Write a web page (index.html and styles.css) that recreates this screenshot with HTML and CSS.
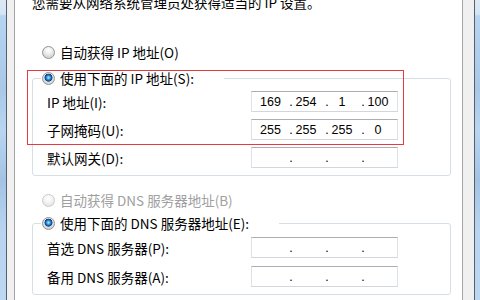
FILE: index.html
```html
<!DOCTYPE html>
<html lang="zh-CN">
<head>
<meta charset="UTF-8">
<title>Internet 协议版本 4 (TCP/IPv4) 属性</title>
<link rel="stylesheet" href="styles.css">
</head>
<body>
  <div class="desk left"></div>
  <div class="frame left"></div>
  <div class="pane">
    <div class="intro">您需要从网络系统管理员处获得适当的 IP 设置。</div>

    <div class="opt"><span class="radio"></span>自动获得 IP 地址(O)</div>

    <fieldset class="group">
      <legend class="opt"><span class="radio on"></span>使用下面的 IP 地址(S):</legend>
      <div class="row">
        <span>IP 地址(I):</span>
        <div class="ipbox">
          <span class="seg first">169</span>
          <span class="dot">.</span><span class="seg">254</span><span></span>
          <span class="dot">.</span><span class="seg">1</span><span></span>
          <span class="dot">.</span><span class="seg">100</span><span></span>
        </div>
      </div>
      <div class="row">
        <span>子网掩码(U):</span>
        <div class="ipbox">
          <span class="seg first">255</span>
          <span class="dot">.</span><span class="seg">255</span><span></span>
          <span class="dot">.</span><span class="seg">255</span><span></span>
          <span class="dot">.</span><span class="seg">0</span><span></span>
        </div>
      </div>
      <div class="row">
        <span>默认网关(D):</span>
        <div class="ipbox">
          <span class="seg first"></span>
          <span class="dot">.</span><span class="seg"></span><span></span>
          <span class="dot">.</span><span class="seg"></span><span></span>
          <span class="dot">.</span><span class="seg"></span><span></span>
        </div>
      </div>
    </fieldset>

    <div class="opt off"><span class="radio"></span>自动获得 DNS 服务器地址(B)</div>

    <fieldset class="group dns">
      <legend class="opt"><span class="radio on"></span>使用下面的 DNS 服务器地址(E):</legend>
      <div class="row">
        <span>首选 DNS 服务器(P):</span>
        <div class="ipbox">
          <span class="seg first"></span>
          <span class="dot">.</span><span class="seg"></span><span></span>
          <span class="dot">.</span><span class="seg"></span><span></span>
          <span class="dot">.</span><span class="seg"></span><span></span>
        </div>
      </div>
      <div class="row">
        <span>备用 DNS 服务器(A):</span>
        <div class="ipbox">
          <span class="seg first"></span>
          <span class="dot">.</span><span class="seg"></span><span></span>
          <span class="dot">.</span><span class="seg"></span><span></span>
          <span class="dot">.</span><span class="seg"></span><span></span>
        </div>
      </div>
    </fieldset>

    <div class="mark"></div>
  </div>
  <div class="frame right"></div>
  <div class="desk right"></div>
</body>
</html>
```

FILE: styles.css
```css
body {
  margin: 0;
  width: 480px;
  height: 300px;
  overflow: hidden;
  display: flex;
  background: #fff;
  font-family: "Noto Sans CJK SC", sans-serif;
  font-size: 13.5px;
  line-height: 16px;
  color: #000;
}

.desk {
  background: linear-gradient(#dde9f5 0, #d6e5f4 14px, #b7d4f1 16px, #a9c8e8 90px, #b9d5f1 130px, #a4c3e4 180px, #b8d4f0 230px, #bcd7f2 300px);
}
.desk.left { width: 6px; }
.desk.right { width: 5px; }

.frame {
  background: #f0f0f0;
  box-sizing: border-box;
}
.frame.left {
  width: 9px;
  border-left: 1px solid #55606b;
  border-right: 1px solid #a5a5a5;
}
.frame.right {
  width: 13px;
  border-left: 1px solid #a5a5a5;
  border-right: 1px solid #55606b;
}

.pane {
  flex: 1;
  position: relative;
  padding: 0 11px 0 17px;
  background: #fff;
}

.intro {
  margin-top: -6px;
}

.opt {
  display: flex;
  align-items: center;
  gap: 5px;
  margin-left: 10px;
  white-space: nowrap;
}
.opt:first-of-type { margin-top: 0; }
.intro + .opt { margin-top: 34px; }
.opt.off {
  margin-top: 16px;
  color: #a0a0a0;
}

.radio {
  width: 13px;
  height: 13px;
  box-sizing: border-box;
  border-radius: 50%;
  border: 1px solid #939393;
  background: radial-gradient(circle at 50% 30%, #ffffff 0, #f2f2f2 3px, #d4d4d4 7px);
  flex: none;
}
.radio.on {
  background:
    radial-gradient(circle at 50% 42%, #b6ecff 0, #4fb2ec 1.4px, #1a70bf 2.6px, #0c3f78 3.7px, transparent 4.3px),
    radial-gradient(circle at 50% 30%, #ffffff 0, #f2f2f2 3px, #d4d4d4 7px);
}
.opt.off .radio {
  border-color: #cbcbcb;
  background: radial-gradient(circle at 50% 30%, #fff 0, #f4f4f4 4px, #e6e6e6 7px);
}

.group {
  margin: 10px 0 0;
  padding: 5px 0 7px 8px;
  border: 1px solid #d5dfe5;
  border-radius: 3px;
  display: flex;
  flex-direction: column;
  gap: 7px;
}
.group.dns {
  margin-top: 7px;
  padding-top: 6px;
  gap: 8px;
}
.group legend {
  margin-left: 0;
  padding: 0 30px 0 1px;
  background: #fff;
}

.row {
  display: grid;
  grid-template-columns: 204px 147px;
  align-items: center;
  height: 21px;
  margin-left: 6px;
  white-space: nowrap;
}

.ipbox {
  box-sizing: border-box;
  height: 21px;
  border: 1px solid #dde2e8;
  border-top-color: #abadb3;
  border-bottom-color: #d3d7dd;
  display: grid;
  grid-template-columns: 37px repeat(3, 4px 26px 6px);
  font-family: "Liberation Sans", Arial, sans-serif;
  font-size: 12.5px;
  line-height: 19px;
  padding-top: 1px;
}
.ipbox .seg { text-align: center; }
.ipbox .dot { text-align: center; }

.mark {
  position: absolute;
  left: 12px;
  top: 70px;
  width: 377px;
  height: 75px;
  box-sizing: border-box;
  border: 1px solid #e8393f;
  pointer-events: none;
}
```
